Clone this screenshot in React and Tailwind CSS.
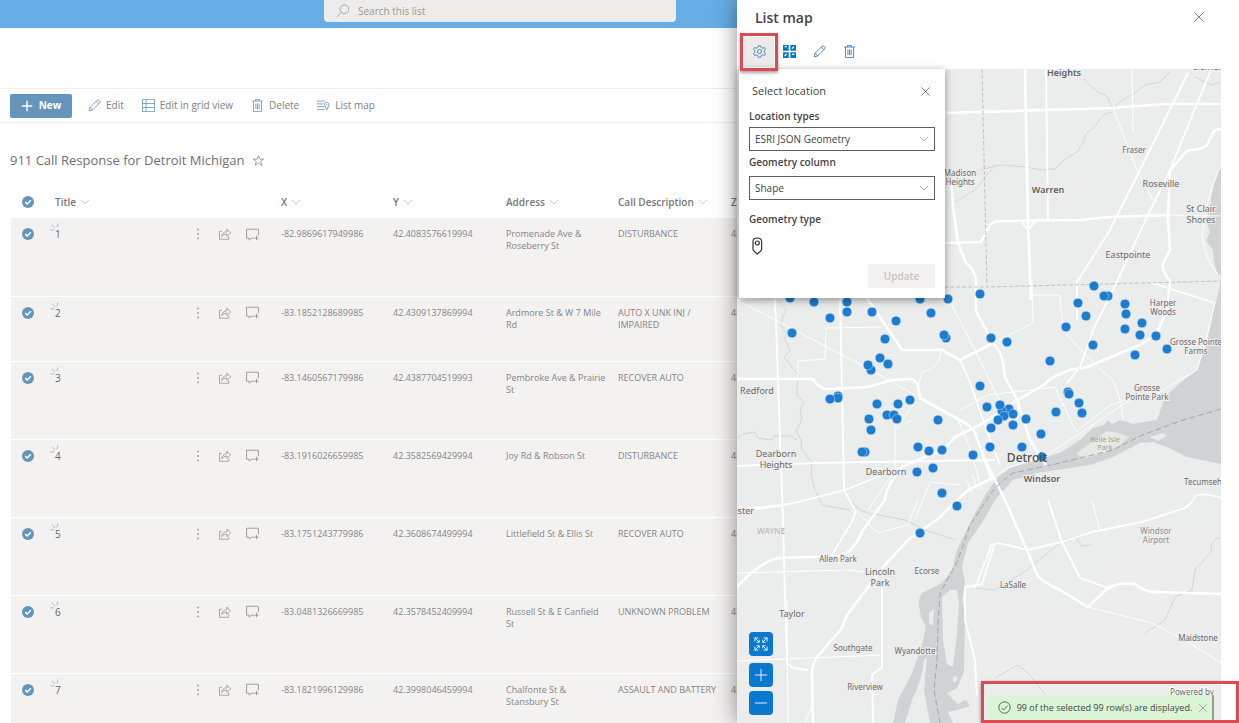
import React from 'react';

const ROWS = [
    { id: 1, x: '-82.9869617949986', y: '42.4083576619994', address: 'Promenade Ave & Roseberry St', call: 'DISTURBANCE' },
    { id: 2, x: '-83.1852128689985', y: '42.4309137869994', address: 'Ardmore St & W 7 Mile Rd', call: 'AUTO X UNK INJ / IMPAIRED', short: true },
    { id: 3, x: '-83.1460567179986', y: '42.4387704519993', address: 'Pembroke Ave & Prairie St', call: 'RECOVER AUTO' },
    { id: 4, x: '-83.1916026659985', y: '42.3582569429994', address: 'Joy Rd & Robson St', call: 'DISTURBANCE' },
    { id: 5, x: '-83.1751243779986', y: '42.3608674499994', address: 'Littlefield St & Ellis St', call: 'RECOVER AUTO' },
    { id: 6, x: '-83.0481326669985', y: '42.3578452409994', address: 'Russell St & E Canfield St', call: 'UNKNOWN PROBLEM' },
    { id: 7, x: '-83.1821996129986', y: '42.3998046459994', address: 'Chalfonte St & Stansbury St', call: 'ASSAULT AND BATTERY' },
];

const COLUMNS = ['X', 'Y', 'Address', 'Call Description', 'Zip Code'];

const CALLS = [
    [790, 298], [814, 302], [847, 302], [920, 299], [948, 299], [980, 294], [830, 318], [847, 312], [872, 312],
    [896, 321], [931, 313], [792, 333], [885, 339], [946, 338], [944, 335], [991, 338], [880, 358], [871, 370],
    [868, 365], [888, 364], [980, 386], [838, 396], [838, 398], [830, 399], [877, 404], [898, 404], [910, 400],
    [987, 407], [869, 419], [887, 415], [894, 415], [897, 419], [938, 420], [871, 430], [991, 428], [865, 452],
    [862, 452], [918, 447], [929, 451], [942, 450], [973, 455], [990, 447], [917, 472], [933, 468], [942, 493],
    [957, 506], [920, 533], [1094, 286], [1108, 296], [1104, 296], [1078, 303], [1086, 316], [1125, 304],
    [1126, 314], [1066, 327], [1142, 323], [1125, 329], [1140, 335], [1156, 336], [1167, 349], [1135, 355],
    [1093, 345], [1007, 342], [1050, 361], [1068, 392], [1069, 394], [1079, 403], [1082, 413], [1056, 412],
    [1006, 413], [1009, 409], [1002, 411], [1000, 405], [1013, 414], [1004, 416], [998, 420], [1013, 425],
    [1026, 419], [1041, 434], [1022, 447], [1042, 457],
];

const HIGHWAYS = [
    'M1025 69L1028 223L1031 300',
    'M944 243L981 242L990 225Q993 221 1000 221L1080 220L1110 217L1170 215',
    'M1022 222L1028 229L1035 222',
    'M1221 129Q1214 129 1212 135L1206 146Q1203 149 1190 150Q1185 151 1182 157L1170 170L1168 217L1170 250L1163 264Q1161 270 1170 281L1168 300Q1163 325 1154 336L1140 345L1087 367L1070 370Q1050 377 1045 384L1013 403L980 425L955 437L944 449L902 467Q885 488 885 500L863 530Q852 555 838 556L778 558Q760 562 737 587',
    'M995 477L968 490L952 505Q945 512 938 519L908 540L885 565L868 587L847 615L842 628L817 657Q812 665 812 673L813 723',
    'M737 379L813 379Q819 389 828 389L868 387L892 380L912 379Q918 382 918 387L920 398L965 423Q974 428 975 433L992 480',
    'M945 182Q952 183 952 190L953 207L958 243L966 263Q975 270 976 280L976 311L993 343Q1002 353 1003 363L1005 377L1017 400L1030 440L1047 467',
    'M867 298L902 350L942 350L960 360L995 342',
    'M985 460L1005 500L1027 550L1037 575Q1044 583 1060 590L1088 607L1108 588Q1120 582 1135 584Q1145 592 1155 592L1221 594',
    'M944 113L980 112L1113 108L1167 104L1221 104',
];

const ROADS = [
    'M775 298L778 377L780 440L783 520L785 600L787 663L793 668L808 670',
    'M840 298L842 390L844 490L855 510Q856 515 850 525L832 555',
    'M1046 69L1048 220',
    'M1210 72L1170 170L1147 217L1113 290L1093 330L1080 367L1067 383',
    'M1188 73L1140 170L1110 230L1077 282V320',
    'M737 510L790 504L845 490L902 467',
    'M737 466L815 463L995 460',
    'M960 360L970 382L990 440L1000 465',
    'M1027 550L1008 545Q990 540 990 550L975 588M1027 550L1062 542L1092 532L1142 522L1185 508Q1193 502 1195 496Q1205 492 1221 498',
    'M1048 500L1062 542L1080 578L1108 588',
    'M1152 283L1215 303',
    'M882 580L882 667L872 675L873 723',
    'M995 543L982 584L965 587V620L975 660L977 695',
    'M737 512L785 505',
];

const STREETS = [
    'M1132 69L1133 132',
    'M1113 108L1137 170L1153 200',
    'M1170 215L1221 216',
    'M737 300L785 325L865 367L915 395',
    'M798 378L798 361L825 359L826 328L882 327',
    'M948 298L975 350L1000 402',
    'M1032 280L1033 323L993 343',
    'M1033 295L1060 295L1063 330L1093 363L1113 380Q1122 400 1123 420',
    'M895 403L895 470L868 510',
    'M737 573L848 570L866 572',
    'M737 661L882 655',
    'M855 510L878 533L908 525L918 500',
    'M1088 607L1152 623L1188 642L1221 663',
    'M922 372Q938 370 941 353',
    'M922 372L918 387',
    'M960 410L988 395L1055 387L1076 432L1110 405L1125 400',
    'M958 420L970 448L982 490',
    'M912 420L895 430L915 402',
    'M737 300L775 296L775 310',
    'M915 520L930 482L960 485M965 478L972 493M972 475L978 489',
    'M1100 530L1092 500M787 600L788 723M805 723L812 705',
    'M1215 303Q1205 345 1197 370L1180 380L1160 392L1130 400L1076 436L1046 455L1010 467L985 482',
    'M1221 165Q1205 200 1202 235Q1205 262 1221 278',
];

const CREEKS = [
    'M1084 79L1090 86L1100 93Q1108 95 1110 103L1113 108L1122 100L1133 94L1145 85L1160 82L1170 72',
    'M1112 112Q1100 115 1097 124L1086 134L1082 145L1077 152L1064 160L1055 169L1040 170L1027 167L1000 165L980 170',
    'M1195 77L1212 85L1221 82',
    'M955 202L975 190L995 165',
    'M778 300L782 305L786 309L783 317L781 325L786 332L785 340L790 350L784 358L789 363L794 370L799 376L797 385L797 395L804 402L800 410L802 420L796 430L801 440L802 450L812 463L811 475L815 490L822 505L850 510',
    'M737 438L743 434L755 432L758 438L772 440L774 436L790 436L797 440',
    'M850 500Q862 515 880 515L905 520L925 530L955 540',
    'M1220 537Q1210 540 1211 552L1195 570L1192 590L1175 597L1165 620L1145 633',
    'M975 588L995 590L1027 570L1060 543L1075 537L1082 546L1092 545',
    'M995 678L1018 665L1028 673L1045 694',
];

const PLACES = [
    { x: 1064, y: 76, size: 9, lines: ['Heights'], bold: true },
    { x: 1210, y: 70, size: 9, lines: ['Clemens'] },
    { x: 1134, y: 153, size: 8, lines: ['Fraser'] },
    { x: 1048, y: 193, size: 9, lines: ['Warren'], bold: true },
    { x: 1161, y: 187, size: 9, lines: ['Roseville'] },
    { x: 1201, y: 212, size: 9, lines: ['St Clair', 'Shores'] },
    { x: 1128, y: 258, size: 9, lines: ['Eastpointe'] },
    { x: 960, y: 176, size: 8, lines: ['Madison', 'Heights'] },
    { x: 757, y: 394, size: 9, lines: ['Redford'] },
    { x: 1163, y: 306, size: 8, lines: ['Harper', 'Woods'] },
    { x: 1196, y: 345, size: 8, lines: ['Grosse Pointe', 'Farms'] },
    { x: 1147, y: 391, size: 8, lines: ['Grosse', 'Pointe Park'] },
    { x: 776, y: 457, size: 9, lines: ['Dearborn', 'Heights'] },
    { x: 886, y: 475, size: 9, lines: ['Dearborn'] },
    { x: 1042, y: 482, size: 9, lines: ['Windsor'], bold: true },
    { x: 1203, y: 485, size: 8, lines: ['Tecumseh'] },
    { x: 743, y: 514, size: 9, lines: ['nster'] },
    { x: 838, y: 562, size: 8, lines: ['Allen Park'] },
    { x: 880, y: 575, size: 9, lines: ['Lincoln', 'Park'] },
    { x: 927, y: 574, size: 8, lines: ['Ecorse'] },
    { x: 1156, y: 534, size: 8, lines: ['Windsor', 'Airport'], faint: true },
    { x: 1013, y: 588, size: 8, lines: ['LaSalle'] },
    { x: 792, y: 617, size: 9, lines: ['Taylor'] },
    { x: 1198, y: 641, size: 8, lines: ['Maidstone'] },
    { x: 853, y: 651, size: 8, lines: ['Southgate'] },
    { x: 915, y: 654, size: 8, lines: ['Wyandotte'] },
    { x: 865, y: 690, size: 8, lines: ['Riverview'] },
];

const Svg = ({ size = 14, children, className = '' }) => (
    <svg width={size} height={size} viewBox="0 0 16 16" fill="none" stroke="currentColor" className={`shrink-0 ${className}`} aria-hidden="true">
        {children}
    </svg>
);

const Chevron = ({ className }) => <Svg size={10} className={className}><path d="M1.500 4.500L8 11L14.500 4.500" /></Svg>;
const Close = ({ size = 12 }) => <Svg size={size}><path d="M2 2L14 14M14 2L2 14" /></Svg>;
const Pencil = ({ size }) => <Svg size={size}><path d="M1.500 14.500L2.600 10.200L11.400 1.400Q12.700 .6 14 2Q15.400 3.300 14.600 4.600L5.800 13.400ZM10.200 2.600L13.400 5.800M2.600 10.200L5.800 13.400" /></Svg>;
const Trash = ({ size }) => <Svg size={size}><path d="M1.500 2.500H14.500M5.500 2.500V.8H10.500V2.500M3 2.500V15.300H13V2.500M6 5.500V12.500M8 5.500V12.500M10 5.500V12.500" /></Svg>;

const CheckCircle = ({ label }) => (
    <label className="relative block size-3">
        <input type="checkbox" defaultChecked aria-label={label} className="block size-3 appearance-none rounded-full bg-[#6695bb]" />
        <Svg size={12} className="pointer-events-none absolute inset-0 text-white"><path d="M4.300 8.200L7 10.700L11.800 5.600" strokeWidth="2" /></Svg>
    </label>
);

const RowActions = () => (
    <div className="flex h-3 items-center text-[#8d8d8d]">
        <button aria-label="More" className="w-[27px]"><Svg size={12}><path d="M8 1V3M8 7V9M8 13V15" strokeWidth="2" /></Svg></button>
        <button aria-label="Share" className="w-[27px]"><Svg size={12}><path d="M4 4.500H.7V15H13V11.500M3.500 11.500Q4.500 5 10.500 5V1.500L15.500 6.500L10.500 11.500V8Q6 8 3.500 11.500Z" /></Svg></button>
        <button aria-label="Comment" className="w-[27px]"><Svg size={13}><path d="M10 12.500H6.500L4 15V12.500H.7V1.500H15.300V9M13 9.500V15M10.500 12.500H15.500" /></Svg></button>
    </div>
);

const CommandButton = ({ icon, children }) => (
    <button className="flex items-center gap-[5px] pr-0.5 text-[#808080]">
        <span className="text-[#6695bb]">{icon}</span>
        {children}
    </button>
);

const ListTable = () => (
    <table className="w-[832px] table-fixed text-left text-[9px] leading-3 text-[#858585]">
        <colgroup>
            <col className="w-[44px]" />
            <col className="w-[226px]" />
            <col className="w-[112px]" />
            <col className="w-[113px]" />
            <col className="w-[112px]" />
            <col className="w-[113px]" />
            <col className="w-[112px]" />
        </colgroup>
        <thead>
            <tr className="h-[32px] text-[10px] text-[#777]">
                <th className="pl-[11px]"><CheckCircle label="Select all" /></th>
                <th className="font-semibold"><span className="flex items-center gap-1">Title<Chevron className="text-[#aaa]" /></span></th>
                {COLUMNS.map((c) => (
                    <th key={c} className="font-semibold whitespace-nowrap"><span className="flex items-center gap-1">{c}<Chevron className="text-[#aaa]" /></span></th>
                ))}
            </tr>
        </thead>
        <tbody>
            {ROWS.map((r) => (
                <tr key={r.id} className={`border-b border-white bg-[#f3f2f1] align-top ${r.short ? 'h-[65px]' : 'h-[78px]'}`}>
                    <td className="pt-2.5 pl-[11px]"><CheckCircle label={`Select row ${r.id}`} /></td>
                    <td className="pt-2.5">
                        <div className="flex items-center justify-between pr-2">
                            <span className="relative text-[10px] text-[#666]">
                                {r.id}
                                <Svg size={12} className="absolute -top-1.5 -left-1.5 text-[#84a9c8]"><path d="M2 10.500H7M4 3.500L8 8M12 2L10.500 7" /></Svg>
                            </span>
                            <RowActions />
                        </div>
                    </td>
                    <td className="pt-2.5">{r.x}</td>
                    <td className="pt-2.5">{r.y}</td>
                    <td className="pt-2.5 pr-3">{r.address}</td>
                    <td className="pt-2.5 whitespace-nowrap">
                        {r.short ? <>AUTO X UNK INJ /<br />IMPAIRED</> : r.call}
                    </td>
                    <td className="pt-2.5">48205</td>
                </tr>
            ))}
        </tbody>
    </table>
);

const CallMap = () => (
    <svg viewBox="737 69 484 654" preserveAspectRatio="xMinYMin slice" className="block h-full w-full bg-[#ebecec]" role="img" aria-label="Map of Detroit">
        <path d="M1221 540L1140 545L1080 610L975 600L970 723H1221Z" fill="#ededed" />
        <g fill="#d0d3d5">
            <path d="M1221 165Q1210 190 1211 205L1206 220L1210 232L1206 241L1213 250L1214 262L1218 275L1221 280Z" />
            <path d="M1221 280L1219 290L1213 313L1207 343L1197 370L1180 383L1165 397L1157 420L1133 424L1120 420L1112 424L1108 420L1104 425L1093 428L1080 440L1062 452L1047 457L1010 468L998 477L985 495L968 527L957 550L952 570L942 583L922 593Q918 598 919 606L921 617L926 626L922 645L912 673L898 700L893 723H905L912 700Q922 680 924 660L927 657L924 690L930 723H953L948 712L957 710L970 706L966 700L958 704L947 693L957 688L964 672L965 613L962 600L965 583L962 567L968 543L982 523L995 500L1013 480L1037 473L1090 465L1113 457L1130 448L1140 443L1153 442L1167 447L1187 457L1221 464Z" />
        </g>
        <g fill="#ebecec">
            <path d="M942 597L950 590H957L959 602L957 633L953 667L947 664L943 640Z" />
            <path d="M929 613L934 609L933 625L929 624Z" />
            <path d="M1076 454L1090 443L1107 431L1118 433L1129 437L1120 445L1107 452L1085 458Z" fill="#e6e8e3" />
            <path d="M1150 437L1163 433L1167 436L1158 441Z" />
            <ellipse cx="955" cy="679" rx="2" ry="3" />
        </g>
        <g fill="none" stroke="#d4d5d5" strokeWidth="1">
            {CREEKS.map((d) => <path key={d} d={d} />)}
        </g>
        <g fill="none" stroke="#ffffff" strokeLinejoin="round">
            {STREETS.map((d) => <path key={d} d={d} strokeWidth="1" />)}
            {ROADS.map((d) => <path key={d} d={d} strokeWidth="1.800" />)}
            {HIGHWAYS.map((d) => <path key={d} d={d} strokeWidth="2.600" />)}
        </g>
        <g fill="none" stroke="#c2c2c2" strokeDasharray="4 2" strokeWidth="1">
            <path d="M982 69L987 287L1221 281M944 287H987" />
            <path d="M1221 409L1180 421L1140 436L1113 450L1060 463L1013 473Q998 483 990 495L970 525L958 560Q950 575 940 593L938 625L937 660L934 690L940 723" stroke="#a9a4a2" strokeDasharray="6 3" />
        </g>
        <g fill="#1c7cd0" stroke="#d6e6f3" strokeWidth="0.500">
            {CALLS.map(([x, y]) => <circle key={`${x}-${y}`} cx={x} cy={y} r="4.800" />)}
        </g>
        <g fontFamily='"Noto Sans", "Open Sans", sans-serif' textAnchor="middle" stroke="#eeeeee" strokeWidth="2" paintOrder="stroke">
            {PLACES.map((p) => (
                <text key={p.lines.join(' ')} fontSize={p.size} fontWeight={p.bold ? 600 : 400} fill={p.faint ? '#8d8d8d' : p.bold ? '#606060' : '#6a6a6a'}>
                    {p.lines.map((line, i) => <tspan key={line} x={p.x} y={p.y + i * (p.size === 9 ? 11 : 9)}>{line}</tspan>)}
                </text>
            ))}
            <text x="1027" y="462" fontSize="12" fontWeight="500" fill="#505050" strokeWidth="0">Detroit</text>
            <text x="771" y="534" fontSize="8" fontWeight="600" fill="#bdbdbd">WAYNE</text>
            <text fontSize="7" fill="#9da095" strokeWidth="0"><tspan x="1105" y="442">Belle Isle</tspan><tspan x="1105" y="450">Park</tspan></text>
            <text x="1192" y="695" fontSize="8" fill="#666666" stroke="#ffffff">Powered by</text>
        </g>
    </svg>
);

const Dropdown = ({ id, label, value, className }) => (
    <>
        <label htmlFor={id} className="block text-[10px] leading-4 font-semibold text-[#444]">{label}</label>
        <div className={`relative ${className}`}>
            <select id={id} className="block h-6 w-full appearance-none border border-[#605e5c] bg-white pl-[5px] text-[10px] text-[#444]">
                <option>{value}</option>
            </select>
            <Chevron className="pointer-events-none absolute top-[7px] right-1.5 text-[#666]" />
        </div>
    </>
);

const LocationCallout = () => (
    <div className="absolute top-0 left-0.5 w-[206px] bg-white px-2.5 py-2.5 shadow-[0_2px_8px_rgba(0,0,0,0.4)]">
        <div className="mb-[5px] flex h-6 items-center justify-between pr-1 pl-[3px] text-[#444]">
            <h3 className="text-[11px]">Select location</h3>
            <button aria-label="Close callout"><Close size={11} /></button>
        </div>
        <Dropdown id="types" label="Location types" value="ESRI JSON Geometry" className="mt-[3px] mb-[3px]" />
        <Dropdown id="column" label="Geometry column" value="Shape" className="mt-1.5 mb-[11px]" />
        <p className="text-[10px] leading-4 font-semibold text-[#444]">Geometry type</p>
        <svg width="18" height="18" viewBox="0 0 18 18" fill="none" stroke="#333" strokeWidth="1.200" className="mt-2.5 mb-[9px] block" aria-hidden="true">
            <path d="M4 4.500Q4 1 8.300 1Q12.600 1 12.600 4.500V12.500Q12.600 13.500 8.300 17Q4 13.500 4 12.500Z" />
            <circle cx="8.300" cy="6" r="2" />
        </svg>
        <button disabled className="ml-auto block h-6 w-[67px] bg-[#f3f2f1] text-[10px] font-semibold text-[#c8c6c4]">Update</button>
    </div>
);

const MapButton = ({ label, children }) => (
    <button aria-label={label} className="flex size-6 items-center justify-center rounded bg-[#0b78d0] text-white">{children}</button>
);

const MapPanel = () => (
    <aside className="relative z-10 flex w-[502px] shrink-0 flex-col bg-white shadow-[0_0_22px_rgba(0,0,0,0.45)]">
        <header className="flex h-[34px] shrink-0 items-center justify-between pr-[34px] pl-[18px]">
            <h2 className="text-[14px] font-semibold text-[#444]">List map</h2>
            <button aria-label="Close panel" className="text-[#555]"><Close size={12} /></button>
        </header>
        <div className="flex h-[35px] shrink-0 items-center pl-[7px] text-[#2f6fae]">
            <button aria-label="Settings" className="relative flex size-[30px] items-center justify-center bg-[#edebe9]">
                <Svg size={13}>
                    <path d="M6.500 1H9.500L10 3L12 4L14 3L15.400 5.500L13.800 7V9L15.400 10.500L14 13L12 12L10 13L9.500 15H6.500L6 13L4 12L2 13L.6 10.500L2.200 9V7L.6 5.500L2 3L4 4L6 3Z" />
                    <circle cx="8" cy="8" r="2.500" />
                </Svg>
                <span className="absolute -inset-1 z-20 border-[3px] border-[#dc4a52] shadow-[0_2px_3px_rgba(0,0,0,0.35)]" />
            </button>
            <button aria-label="Cluster" className="flex size-[30px] items-center justify-center text-[#0f74c4]">
                <Svg size={13}>
                    <path d="M0 0H7V7H0ZM9 0H16V7H9ZM0 9H7V16H0ZM9 9H16V16H9Z" fill="currentColor" stroke="none" />
                    <path d="M2 2L4.500 2M11 4.500L13.500 2M2 13.500L4.500 11M11 11.500H14" stroke="#fff" strokeWidth="1.500" />
                </Svg>
            </button>
            <button aria-label="Edit drawing" className="flex size-[30px] items-center justify-center"><Pencil size={13} /></button>
            <button aria-label="Clear drawing" className="flex size-[30px] items-center justify-center"><Trash size={13} /></button>
        </div>
        <div className="relative mr-[18px] min-h-0 flex-1">
            <CallMap />
            <LocationCallout />
            <div className="absolute bottom-2 left-3 flex flex-col gap-1">
                <span className="mb-[3px]">
                    <MapButton label="Full extent"><Svg><path d="M1 5V1H5M11 1H15V5M15 11V15H11M5 15H1V11M1 1L6 6M15 1L10 6M15 15L10 10M1 15L6 10M6 3V6H3M10 3V6H13M6 13V10H3M10 13V10H13" /></Svg></MapButton>
                </span>
                <MapButton label="Zoom in"><Svg><path d="M8 1V15M1 8H15" /></Svg></MapButton>
                <MapButton label="Zoom out"><Svg><path d="M1 8H15" /></Svg></MapButton>
            </div>
        </div>
        <div className="absolute right-0 bottom-0 flex h-[42px] w-[258px] items-end border-[3px] border-[#dc4a52] pr-[22px] pl-1 shadow-[0_2px_4px_rgba(0,0,0,0.4)]">
            <div role="status" className="flex h-[25px] flex-1 items-center justify-between border-r-2 border-[#999] bg-[#d9f5d6] pr-1 pl-2.5 text-[9px] text-[#444]">
                <Svg size={13}><circle cx="8" cy="8" r="7" /><path d="M4.500 8.500L7 11L11.800 5.800" /></Svg>
                <span className="whitespace-nowrap">99 of the selected 99 row(s) are displayed.</span>
                <button aria-label="Dismiss" className="text-[#777]"><Close size={10} /></button>
            </div>
        </div>
    </aside>
);

export default function App() {
    return (
        <div className="flex h-screen overflow-hidden bg-white font-['Open_Sans',sans-serif]">
            <main className="min-w-0 flex-1 overflow-hidden">
                <div className="h-7 bg-[#67aee6] pl-[324px]">
                    <label className="flex h-[22px] w-[352px] items-center gap-2 rounded-b-sm bg-[#edecea] pl-3 text-[#8fa9c0]">
                        <Svg><circle cx="9.500" cy="6" r="5" /><path d="M6 9.500L1 15" /></Svg>
                        <input aria-label="Search" placeholder="Search this list" className="w-full text-[10px] text-[#777] outline-none placeholder:text-[#999]" />
                    </label>
                </div>
                <div className="mt-[60px] flex h-[35px] items-center gap-4 border-y border-[#efefef] pl-2.5 text-[10px]">
                    <button className="flex h-6 w-[62px] items-center justify-center gap-1.5 rounded-xs bg-[#6695bb] font-bold text-white">
                        <Svg size={12}><path d="M8 1V15M1 8H15" strokeWidth="1.800" /></Svg>
                        New
                    </button>
                    <CommandButton icon={<Pencil size={13} />}>Edit</CommandButton>
                    <CommandButton icon={<Svg size={13}><path d="M.5 .5H15.500V15.500H.5ZM5 .5V15.500M.5 5.500H15.500M.5 10.500H15.500" /></Svg>}>Edit in grid view</CommandButton>
                    <CommandButton icon={<Trash size={13} />}>Delete</CommandButton>
                    <CommandButton icon={<Svg size={13}><path d="M0 2.500H10M0 6H8M0 9.500H9M0 13H9M12 13.500L9.500 8.500Q8.500 4 12 4Q15.500 4 14.500 8.500ZM12 6.500V8" /></Svg>}>List map</CommandButton>
                </div>
                <div className="flex h-[63px] items-center gap-2 pt-3 pl-2.5 text-[#707070]">
                    <h1 className="text-[13px] font-medium">911 Call Response for Detroit Michigan</h1>
                    <Svg size={11}><path d="M8 1L10 6H15.500L11.200 9.500L12.800 15L8 11.700L3.200 15L4.800 9.500L.5 6H6Z" /></Svg>
                </div>
                <div className="pl-[11px]">
                    <ListTable />
                </div>
            </main>
            <MapPanel />
        </div>
    );
}
